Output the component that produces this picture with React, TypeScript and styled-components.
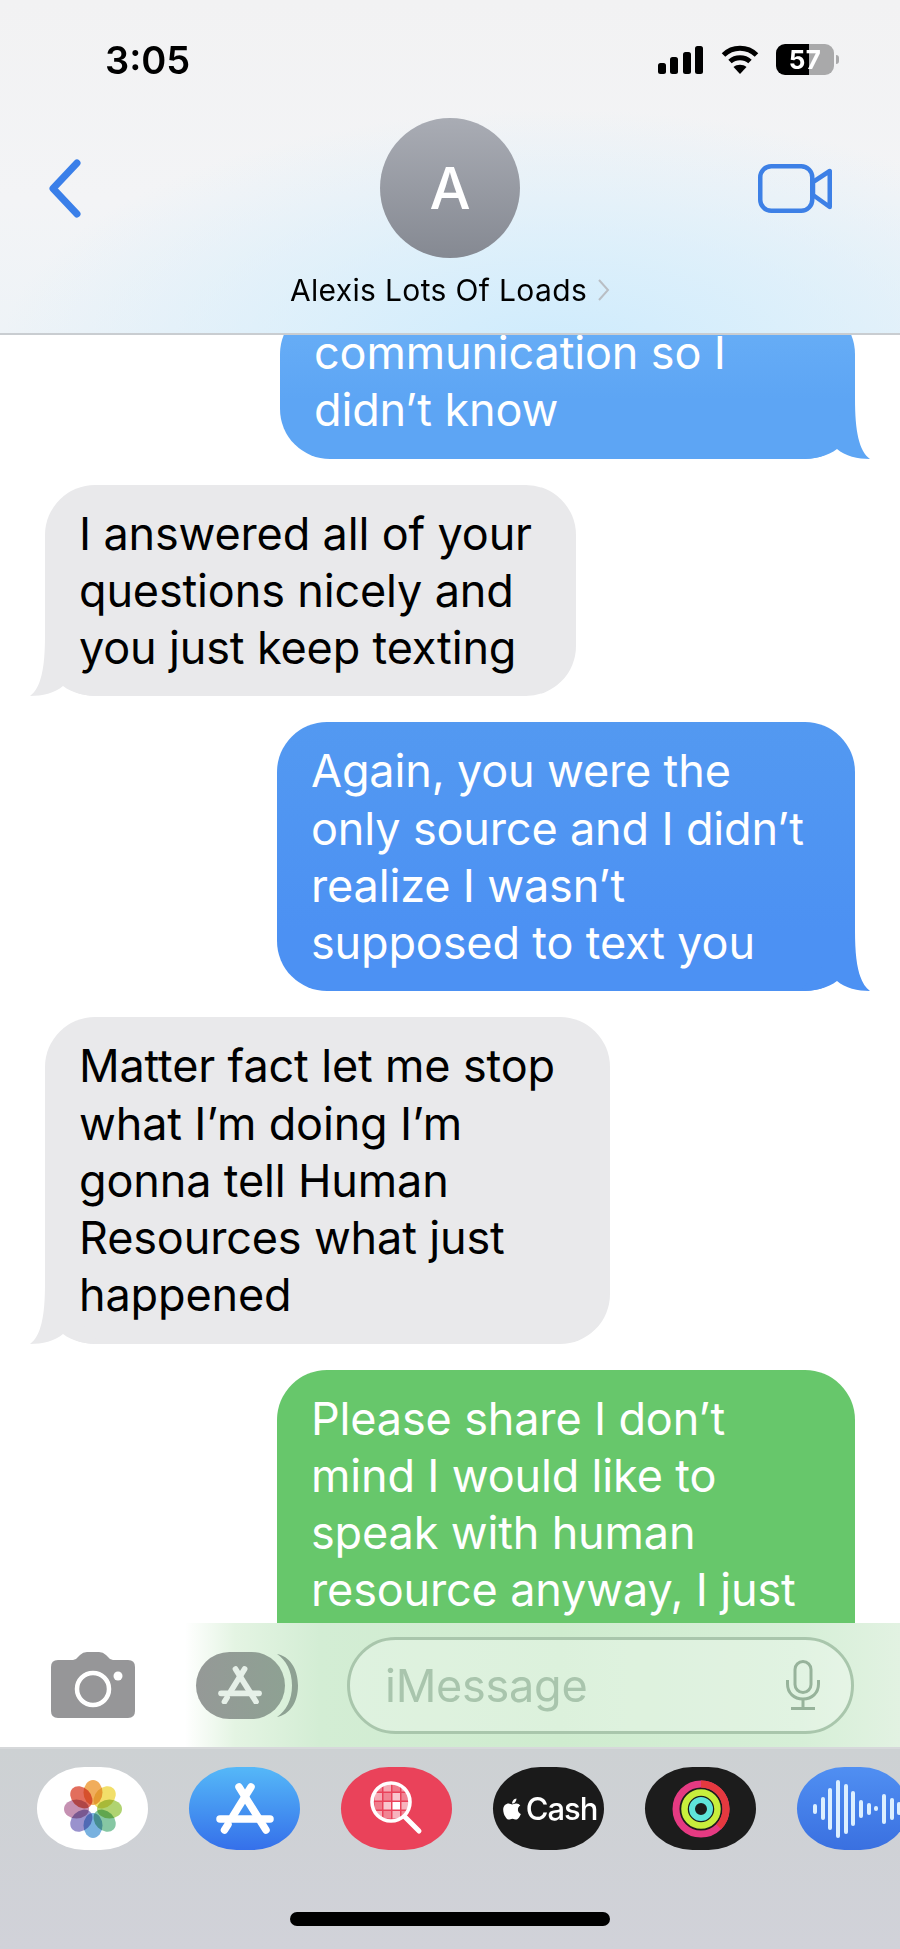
import React from "react";
import styled, { createGlobalStyle } from "styled-components";
import { FaApple } from "react-icons/fa";

const Global = createGlobalStyle`
  html, body { margin: 0; padding: 0; background: #fff; }
  body { width: 900px; height: 1949px; overflow: hidden; font-family: Inter, "Liberation Sans", sans-serif; }
`;

const Phone = styled.div`
  width: 900px;
  height: 1949px;
  display: flex;
  flex-direction: column;
  overflow: hidden;
  background: #fff;
`;

/* ---------- header ---------- */
const Header = styled.header`
  height: 335px;
  flex-shrink: 0;
  box-sizing: border-box;
  border-bottom: 2px solid #c9cdd1;
  background:
    radial-gradient(ellipse 560px 250px at 62% 108%, #cdebfd 0%, rgba(214, 238, 252, 0.75) 45%, rgba(240, 244, 247, 0) 100%),
    linear-gradient(180deg, #f2f2f3 0%, #f3f4f6 60%, #eef3f7 100%);
  display: flex;
  flex-direction: column;
`;
const StatusBar = styled.div`
  display: flex;
  align-items: center;
  justify-content: space-between;
  height: 31px;
  margin-top: 44px;
  padding: 0 66px 0 105px;
`;
const Time = styled.span`
  font-size: 38px;
  font-weight: 600;
  letter-spacing: 0;
  color: #000;
`;
const StatusIcons = styled.div`
  display: flex;
  align-items: center;
  gap: 17.5px;
`;
const Signal = styled.div`
  display: flex;
  align-items: flex-end;
  gap: 4.5px;
  height: 28px;
`;
const SignalBar = styled.i<{ $h: number }>`
  display: block;
  width: 8px;
  height: ${(p) => p.$h}px;
  border-radius: 2.5px;
  background: #000;
`;
const Battery = styled.div`
  position: relative;
  width: 58px;
  height: 31px;
  border-radius: 9px;
  background: linear-gradient(90deg, #000 0 57%, #a9a9aa 57% 100%);
  color: #fff;
  font-size: 26px;
  font-weight: 700;
  line-height: 31px;
  text-align: center;
  letter-spacing: 0.5px;
  &::after {
    content: "";
    position: absolute;
    right: -5px;
    top: 11px;
    width: 3px;
    height: 9px;
    border-radius: 0 3px 3px 0;
    background: #a9a9aa;
  }
`;
const NavRow = styled.div`
  display: grid;
  grid-template-columns: 1fr 140px 1fr;
  align-items: center;
  margin-top: 43px;
  padding: 0 48px;
`;
const BackIcon = styled.svg`
  display: block;
`;
const VideoIcon = styled.svg`
  display: block;
  justify-self: end;
  margin-right: 20px;
`;
const Avatar = styled.div`
  width: 140px;
  height: 140px;
  border-radius: 50%;
  background: linear-gradient(180deg, #a9acb4 0%, #858992 100%);
  color: #fff;
  font-size: 58px;
  font-weight: 500;
  display: flex;
  align-items: center;
  justify-content: center;
`;
const NameRow = styled.div`
  display: flex;
  align-items: center;
  justify-content: center;
  gap: 10px;
  margin-top: 15px;
  height: 34px;
`;
const Name = styled.span`
  font-size: 30px;
  font-weight: 400;
  letter-spacing: 0.35px;
  color: #000;
`;

/* ---------- messages ---------- */
const Messages = styled.main`
  flex: 1;
  min-height: 0;
  overflow: hidden;
  display: flex;
  flex-direction: column;
  gap: 26px;
`;
const Bubble = styled.div<{ $w: number; $sent?: boolean; $bg: string; $first?: boolean; $cut?: boolean }>`
  position: relative;
  flex-shrink: 0;
  box-sizing: border-box;
  width: ${(p) => p.$w}px;
  margin-left: ${(p) => (p.$sent ? "auto" : "45px")};
  margin-right: ${(p) => (p.$sent ? "45px" : "0")};
  margin-top: ${(p) => (p.$first ? "-31px" : "0")};
  padding: 20px 0 ${(p) => (p.$cut ? "80px" : "20px")} 34px;
  border-radius: 50px;
  background: ${(p) => p.$bg};
  color: ${(p) => (p.$sent ? "#fff" : "#000")};
  font-size: 45px;
  line-height: 57.25px;
  letter-spacing: -0.15px;
  white-space: pre;
`;
const TailSvg = styled.svg<{ $sent?: boolean }>`
  position: absolute;
  bottom: 0;
  ${(p) => (p.$sent ? "right: -15px;" : "left: -15px; transform: scaleX(-1);")}
`;
const Tail = ({ sent, fill }: { sent?: boolean; fill: string }) => (
  <TailSvg $sent={sent} width="70" height="60" viewBox="0 0 70 60">
    <path d="M55 0 C55 32 59 52 70 60 C58 60 45 57 37 50 C28 57 15 60 0 60 Z" fill={fill} />
  </TailSvg>
);

/* ---------- compose bar ---------- */
const Compose = styled.div`
  height: 124px;
  flex-shrink: 0;
  box-sizing: border-box;
  display: flex;
  align-items: center;
  padding: 0 46px 0 51px;
  background: linear-gradient(90deg, #fff 0, #fff 185px, #e4f4e3 235px, #d3edd4 320px, #cfeccf 560px, #d6efd7 800px, #e2f2e2 900px);
`;
const CameraIcon = styled.svg`
  display: block;
  flex-shrink: 0;
`;
const AppButton = styled.div`
  position: relative;
  flex-shrink: 0;
  width: 89px;
  height: 67px;
  margin-left: 61px;
  border-radius: 34px;
  background: linear-gradient(90deg, #959997 0%, #8ea193 100%);
  display: flex;
  align-items: center;
  justify-content: center;
`;
const Crescent = styled.svg`
  position: absolute;
  right: -13px;
  top: 0;
`;
const InputPill = styled.div`
  flex: 1;
  height: 97px;
  margin-left: 62px;
  box-sizing: border-box;
  border: 3px solid #a9c6ac;
  border-radius: 49px;
  background: rgba(255, 255, 255, 0.28);
  display: flex;
  align-items: center;
  justify-content: space-between;
  padding: 0 31px 0 35px;
`;
const Placeholder = styled.span`
  font-size: 45px;
  letter-spacing: -0.25px;
  color: #a9c5ad;
`;
const MicIcon = styled.svg`
  display: block;
`;

/* ---------- app tray ---------- */
const Tray = styled.div`
  height: 202px;
  flex-shrink: 0;
  display: flex;
  flex-direction: column;
  background: linear-gradient(180deg, #cdd1d3 0%, #d1d2d9 100%);
  border-top: 2px solid #d6d8da;
  box-sizing: border-box;
`;
const Pills = styled.div`
  display: flex;
  gap: 41px;
  padding: 18px 0 0 37px;
  overflow: hidden;
`;
const Pill = styled.div<{ $bg: string }>`
  flex-shrink: 0;
  width: 111px;
  height: 83px;
  border-radius: 48px / 42px;
  background: ${(p) => p.$bg};
  display: flex;
  align-items: center;
  justify-content: center;
`;
const CashMark = styled.div`
  display: flex;
  align-items: center;
  color: #fff;
  font-size: 31px;
  font-weight: 500;
  letter-spacing: -1px;
  gap: 2px;
`;
const VoiceBars = styled.div`
  display: flex;
  align-items: center;
  gap: 3.7px;
  margin-left: 17px;
  width: 100%;
`;
const VoiceBar = styled.i<{ $h: number }>`
  display: block;
  flex-shrink: 0;
  width: 4px;
  height: ${(p) => p.$h}px;
  border-radius: 2px;
  background: #dcefff;
`;
const HomeBar = styled.div`
  width: 320px;
  height: 14px;
  border-radius: 7px;
  background: #000;
  margin: 62px auto 0;
`;

/* ---------- drawings ---------- */
const AppGlyph = ({ scale, color }: { scale: number; color: string }) => (
  <svg width={58 * scale} height={51 * scale} viewBox="0 0 58 51" fill="none" stroke={color} strokeWidth="7.5" strokeLinecap="round" style={{ display: "block" }}>
    <path d="M35 4 L17 33" />
    <path d="M12 41.5 L8.5 47" />
    <path d="M23 4 L50 47" />
    <path d="M4 36 H54" />
  </svg>
);

const petals: [number, string][] = [
  [0, "#f0a54a"],
  [45, "#f1dc5a"],
  [90, "#a8cf62"],
  [135, "#79c29a"],
  [180, "#6aa9dc"],
  [225, "#8f87c8"],
  [270, "#bf86aa"],
  [315, "#df5f4c"],
];
const PhotosGlyph = () => (
  <svg width="58" height="58" viewBox="-29 -29 58 58" style={{ display: "block" }}>
    <g style={{ isolation: "isolate" }} opacity="0.9">
      {petals.map(([a, c]) => (
        <ellipse key={a} cx="0" cy="-16.5" rx="9.5" ry="12.5" fill={c} transform={`rotate(${a})`} style={{ mixBlendMode: "multiply" }} />
      ))}
    </g>
  </svg>
);

const cells: [number, number, number][] = [
  [-15, -19, 0.3], [-6, -19, 0.55], [3, -19, 0.3], [12, -19, 0.5],
  [-15, -10, 0.55], [-6, -10, 0.35], [3, -10, 0.7], [12, -10, 0.35],
  [-15, -1, 0.3], [-6, -1, 0.7], [3, -1, 1], [12, -1, 0.6],
  [-15, 8, 0.55], [-6, 8, 0.35], [3, 8, 0.6], [12, 8, 0.35],
];
const SearchGlyph = () => (
  <svg width="58" height="58" viewBox="-23 -24 58 58" fill="none" style={{ display: "block" }}>
    <defs>
      <clipPath id="lens">
        <circle cx="0" cy="-2" r="19" />
      </clipPath>
    </defs>
    <g clipPath="url(#lens)">
      {cells.map(([x, y, o], i) => (
        <rect key={i} x={x - 1.5} y={y - 1} width="7.5" height="7.5" fill="#fff" opacity={o} />
      ))}
    </g>
    <circle cx="0" cy="-2" r="19" stroke="#fff" strokeWidth="3.6" />
    <path d="M14 13 L28 27" stroke="#fff" strokeWidth="5" strokeLinecap="round" />
  </svg>
);

const RingsGlyph = () => (
  <svg width="58" height="58" viewBox="-29 -29 58 58" fill="none" style={{ display: "block" }}>
    <circle r="25" stroke="#e53a82" strokeWidth="7" />
    <path d="M0 -25 A25 25 0 0 1 17.7 17.7" stroke="#e5393f" strokeWidth="7" />
    <circle r="16.5" stroke="#c8ee3c" strokeWidth="6.5" />
    <circle r="9" stroke="#5fe4da" strokeWidth="6" />
  </svg>
);

const voice = [10, 23, 42, 58, 50, 35, 18, 12, 5, 30, 22, 13, 5];

export default function App() {
  const blueA = "linear-gradient(180deg, #6ab0f7 0%, #5da5f4 calc(100% - 60px), #5da5f4 100%)";
  const blueB = "linear-gradient(180deg, #5399f1 0%, #4c91f3 calc(100% - 60px), #4c91f3 100%)";
  return (
    <Phone>
      <Global />
      <Header>
        <StatusBar>
          <Time>3:05</Time>
          <StatusIcons>
            <Signal>
              <SignalBar $h={11} />
              <SignalBar $h={17} />
              <SignalBar $h={22} />
              <SignalBar $h={28} />
            </Signal>
            <svg width="38" height="29" viewBox="0 0 38 29" fill="none" stroke="#000" style={{ display: "block" }}>
              <path d="M2.5 10 C11.5 1 26.5 1 35.5 10" strokeWidth="5" />
              <path d="M9 16.5 C14.5 11.5 23.5 11.5 29 16.5" strokeWidth="5" />
              <path d="M19 29 L12.5 22 C16 19 22 19 25.5 22 Z" fill="#000" stroke="none" />
            </svg>
            <Battery>57</Battery>
          </StatusIcons>
        </StatusBar>
        <NavRow>
          <BackIcon width="33" height="59" viewBox="0 0 33 59" fill="none" stroke="#3a7fe9" strokeWidth="7" strokeLinecap="round" strokeLinejoin="round">
            <path d="M29 4 L5 29.5 L29 55" />
          </BackIcon>
          <Avatar>A</Avatar>
          <VideoIcon width="74" height="49" viewBox="0 0 74 49" fill="none" stroke="#3d80e6" strokeWidth="4.5" strokeLinejoin="round">
            <rect x="2.25" y="2.25" width="52" height="44.5" rx="11" />
            <path d="M55 18 L71.75 7 V43 L55 31 Z" />
          </VideoIcon>
        </NavRow>
        <NameRow>
          <Name>Alexis Lots Of Loads</Name>
          <svg width="13" height="24" viewBox="0 0 13 24" fill="none" stroke="#b9bec4" strokeWidth="2" style={{ display: "block" }}>
            <path d="M2 2 L11 12 L2 22" />
          </svg>
        </NameRow>
      </Header>

      <Messages>
        <Bubble $first $sent $w={575} $bg={blueA}>
          {"communication so I\ndidn\u2019t know"}
          <Tail sent fill="#5da5f4" />
        </Bubble>
        <Bubble $w={531} $bg="#e9e9eb">
          {"I answered all of your\nquestions nicely and\nyou just keep texting"}
          <Tail fill="#e9e9eb" />
        </Bubble>
        <Bubble $sent $w={578} $bg={blueB}>
          {"Again, you were the\nonly source and I didn\u2019t\nrealize I wasn\u2019t\nsupposed to text you"}
          <Tail sent fill="#4c91f3" />
        </Bubble>
        <Bubble $w={565} $bg="#e9e9eb">
          {"Matter fact let me stop\nwhat I\u2019m doing I\u2019m\ngonna tell Human\nResources what just\nhappened"}
          <Tail fill="#e9e9eb" />
        </Bubble>
        <Bubble $cut $sent $w={578} $bg="#67c76b">
          {"Please share I don\u2019t\nmind I would like to\nspeak with human\nresource anyway, I just"}
        </Bubble>
      </Messages>

      <Compose>
        <CameraIcon width="84" height="66" viewBox="0 0 84 66">
          <path d="M7 8 H22 Q25 8 27 5 L29 3 Q32 0 36 0 H48 Q52 0 55 3 L57 5 Q59 8 62 8 H77 Q84 8 84 15 V59 Q84 66 77 66 H7 Q0 66 0 59 V15 Q0 8 7 8 Z" fill="#969698" />
          <circle cx="42" cy="37" r="16" fill="none" stroke="#fff" strokeWidth="4.5" />
          <circle cx="67" cy="24" r="4.5" fill="#fff" />
        </CameraIcon>
        <AppButton>
          <AppGlyph scale={0.76} color="#e6f0e8" />
          <Crescent width="21" height="67" viewBox="0 0 21 67">
            <path d="M0 2 C12 4 21 16 21 33.5 C21 51 12 63 0 65 C9 59 15 48 15 33.5 C15 19 9 8 0 2 Z" fill="#8ea193" />
          </Crescent>
        </AppButton>
        <InputPill>
          <Placeholder>iMessage</Placeholder>
          <MicIcon width="34" height="50" viewBox="0 0 34 50" fill="none" stroke="#97b39b" strokeWidth="3">
            <rect x="9" y="1.5" width="16" height="31" rx="8" />
            <path d="M1.5 20 V24 C1.5 33 8 39 17 39 C26 39 32.5 33 32.5 24 V20" />
            <path d="M17 39 V48 M5 48.5 H29" />
          </MicIcon>
        </InputPill>
      </Compose>

      <Tray>
        <Pills>
          <Pill $bg="#fff"><PhotosGlyph /></Pill>
          <Pill $bg="linear-gradient(180deg, #55b8f8 0%, #3570ea 100%)"><AppGlyph scale={1} color="#fff" /></Pill>
          <Pill $bg="#ea425a"><SearchGlyph /></Pill>
          <Pill $bg="#1a1a1a">
            <CashMark>
              <FaApple size={24} />
              Cash
            </CashMark>
          </Pill>
          <Pill $bg="#1c1c1c"><RingsGlyph /></Pill>
          <Pill $bg="linear-gradient(180deg, #508ff2 0%, #3a70e0 100%)">
            <VoiceBars>
              {voice.map((h, i) => (
                <VoiceBar key={i} $h={h} />
              ))}
            </VoiceBars>
          </Pill>
        </Pills>
        <HomeBar />
      </Tray>
    </Phone>
  );
}
